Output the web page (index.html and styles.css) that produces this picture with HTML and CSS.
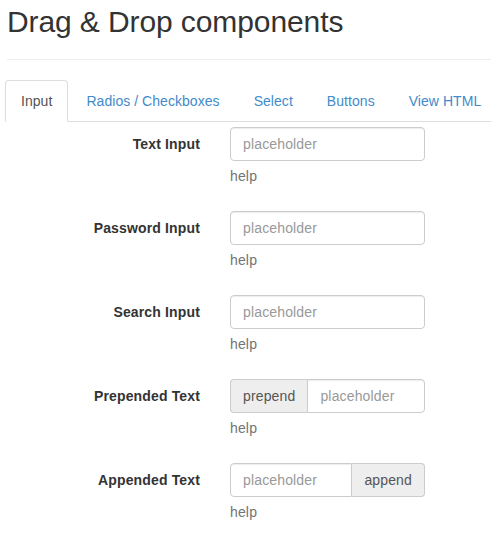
FILE: index.html
```html
<!DOCTYPE html>
<html>
<head>
<meta charset="utf-8">
<link rel="stylesheet" href="styles.css">
</head>
<body>
<div class="page-header">
  <h1>Drag &amp; Drop components</h1>
</div>
<ul class="nav-tabs">
  <li class="active"><a href="#">Input</a></li>
  <li><a href="#">Radios / Checkboxes</a></li>
  <li><a href="#">Select</a></li>
  <li><a href="#">Buttons</a></li>
  <li><a href="#">View HTML</a></li>
</ul>
<form class="form-horizontal">
  <div class="form-group">
    <label class="control-label">Text Input</label>
    <div class="controls">
      <input class="form-control" type="text" placeholder="placeholder">
      <p class="help-block">help</p>
    </div>
  </div>
  <div class="form-group">
    <label class="control-label">Password Input</label>
    <div class="controls">
      <input class="form-control" type="password" placeholder="placeholder">
      <p class="help-block">help</p>
    </div>
  </div>
  <div class="form-group">
    <label class="control-label">Search Input</label>
    <div class="controls">
      <input class="form-control" type="text" placeholder="placeholder">
      <p class="help-block">help</p>
    </div>
  </div>
  <div class="form-group">
    <label class="control-label">Prepended Text</label>
    <div class="controls">
      <div class="input-group">
        <span class="addon addon-left">prepend</span>
        <input class="form-control grouped-right" type="text" placeholder="placeholder">
      </div>
      <p class="help-block">help</p>
    </div>
  </div>
  <div class="form-group">
    <label class="control-label">Appended Text</label>
    <div class="controls">
      <div class="input-group">
        <input class="form-control grouped-left" type="text" placeholder="placeholder">
        <span class="addon addon-right">append</span>
      </div>
      <p class="help-block">help</p>
    </div>
  </div>
</form>
</body>
</html>
```

FILE: styles.css
```css
* { box-sizing: border-box; }
html, body { background: #fff; }
body {
  margin: 0;
  font-family: "Liberation Sans", Arial, sans-serif;
  font-size: 14px;
  line-height: 20px;
  letter-spacing: 0.15px;
  color: #333;
}
.page-header {
  margin-left: 7px;
  padding-bottom: 21px;
  border-bottom: 1px solid #eee;
}
.page-header h1 {
  margin: 0;
  padding-top: 5px;
  font-size: 30px;
  font-weight: normal;
  line-height: 33px;
  letter-spacing: -0.1px;
  color: #333;
}
.nav-tabs {
  display: flex;
  list-style: none;
  margin: 20px 0 0 5px;
  padding: 0;
  border-bottom: 1px solid #ddd;
}
.nav-tabs li {
  margin-right: 2px;
  margin-bottom: -1px;
}
.nav-tabs a {
  display: block;
  padding: 10px 15px;
  line-height: 20px;
  letter-spacing: 0.05px;
  border: 1px solid transparent;
  border-radius: 4px 4px 0 0;
  color: #428bca;
  text-decoration: none;
  white-space: nowrap;
}
.nav-tabs li.active a {
  color: #555;
  background: #fff;
  border-color: #ddd;
  border-bottom-color: transparent;
}
.form-horizontal {
  margin: 5px 0 0;
}
.form-group {
  display: grid;
  grid-template-columns: 200px 195px;
  column-gap: 30px;
  margin-bottom: 15px;
}
.control-label {
  font-weight: bold;
  text-align: right;
  padding-top: 7px;
  white-space: nowrap;
}
.form-control {
  display: block;
  width: 100%;
  height: 34px;
  padding: 6px 12px;
  font-family: inherit;
  font-size: 14px;
  line-height: 20px;
  letter-spacing: 0.15px;
  color: #555;
  background: #fff;
  border: 1px solid #ccc;
  border-radius: 4px;
  box-shadow: inset 0 1px 1px rgba(0,0,0,.075);
  outline: none;
}
.form-control::placeholder { color: #999; }
.help-block {
  margin: 5px 0 10px;
  color: #737373;
}
.input-group {
  display: flex;
}
.input-group .form-control {
  flex: 1 1 auto;
  width: auto;
  min-width: 0;
}
.addon {
  display: block;
  height: 34px;
  padding: 6px 12px;
  line-height: 20px;
  color: #555;
  background: #eee;
  border: 1px solid #ccc;
  white-space: nowrap;
}
.addon-left {
  border-radius: 4px 0 0 4px;
  border-right: 0;
}
.addon-right {
  border-radius: 0 4px 4px 0;
  border-left: 0;
}
.grouped-right { border-radius: 0 4px 4px 0; }
.grouped-left { border-radius: 4px 0 0 4px; }
```
